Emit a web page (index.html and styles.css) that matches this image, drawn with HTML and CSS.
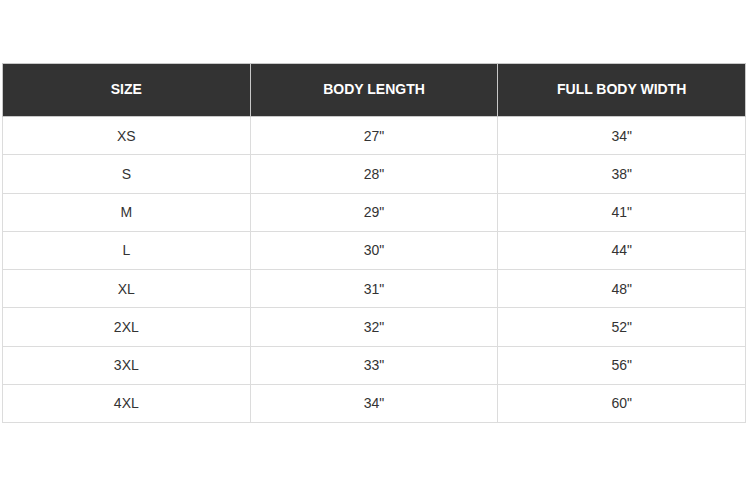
FILE: index.html
```html
<!DOCTYPE html>
<html>
<head>
<meta charset="utf-8">
<link rel="stylesheet" href="styles.css">
</head>
<body>
<div class="wrap">
<table class="size-table">
  <thead>
    <tr><th>SIZE</th><th>BODY LENGTH</th><th>FULL BODY WIDTH</th></tr>
  </thead>
  <tbody>
    <tr><td>XS</td><td>27"</td><td>34"</td></tr>
    <tr><td>S</td><td>28"</td><td>38"</td></tr>
    <tr><td>M</td><td>29"</td><td>41"</td></tr>
    <tr><td>L</td><td>30"</td><td>44"</td></tr>
    <tr><td>XL</td><td>31"</td><td>48"</td></tr>
    <tr><td>2XL</td><td>32"</td><td>52"</td></tr>
    <tr><td>3XL</td><td>33"</td><td>56"</td></tr>
    <tr><td>4XL</td><td>34"</td><td>60"</td></tr>
  </tbody>
</table>
</div>
</body>
</html>
```
FILE: styles.css
```css
html, body {
  margin: 0;
  padding: 0;
  background: #fff;
}
.wrap {
  padding: 63px 4px 0 2px;
}
.size-table {
  width: 744px;
  border-collapse: collapse;
  font-family: "Liberation Sans", Arial, sans-serif;
  table-layout: fixed;
}
.size-table th,
.size-table td {
  border: 1px solid #dcdcdc;
  text-align: center;
  padding: 0;
}
.size-table th {
  background: #333333;
  color: #fff;
  font-size: 14px;
  font-weight: bold;
  height: 50px;
  padding-bottom: 2px;
  border-color: #c8c8c8;
}
.size-table td {
  color: #333;
  font-size: 14px;
  height: 37.25px;
}
```
